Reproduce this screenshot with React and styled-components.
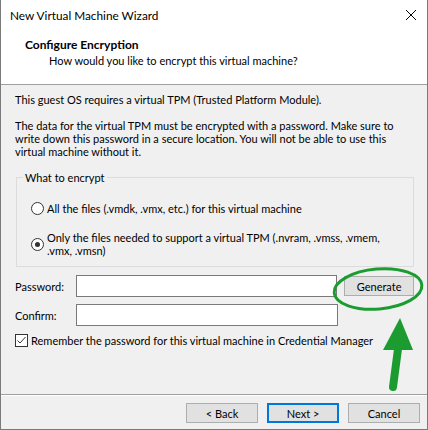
import React from "react"
import styled, { createGlobalStyle } from "styled-components"

const GlobalStyle = createGlobalStyle`
	html, body {
		margin: 0;
		padding: 0;
		background: #ffffff;
	}
	* {
		box-sizing: border-box;
	}
`

const Window = styled.div`
	position: relative;
	width: 428px;
	height: 430px;
	display: flex;
	flex-direction: column;
	background: #f0f0f0;
	border: 1px solid #7a7a7a;
	border-top: none;
	font-family: Lato, "Noto Sans", sans-serif;
	font-size: 11px;
	color: #000000;
	overflow: hidden;
`

const TitleBar = styled.div`
	height: 30px;
	display: flex;
	align-items: center;
	justify-content: space-between;
	padding: 0 9px 0 9px;
	background: #ffffff;
	font-size: 11.8px;
`

const CloseButton = styled.div`
	width: 12px;
	height: 12px;
	display: flex;
	margin-right: 1px;
`

const Header = styled.div`
	height: 55px;
	padding: 6px 0 0 24px;
	background: #ffffff;
	border-bottom: 1px solid #a0a0a0;
`

const HeaderTitle = styled.div`
	font-weight: 700;
	font-size: 12px;
	line-height: 17px;
`

const HeaderSubtitle = styled.div`
	line-height: 16px;
	padding-left: 24px;
`

const Body = styled.div`
	flex: 1;
	display: flex;
	flex-direction: column;
	padding: 8px 13px 0 14px;
`

const Paragraph = styled.p`
	margin: 0 0 13px 0;
	line-height: 13px;
	white-space: nowrap;
`

const GroupBox = styled.fieldset`
	margin: 0 0 0 1px;
	border: 1px solid #dcdcdc;
	display: flex;
	flex-direction: column;
	gap: 16px;
	padding: 18px 10px 9px 14px;
`

const GroupLabel = styled.legend`
	padding: 0 2px;
	margin-left: -8px;
	line-height: 13px;
`

const OptionRow = styled.label`
	display: flex;
	align-items: center;
	gap: 3px;
	line-height: 13px;
	white-space: nowrap;
`

const Radio = styled.span`
	flex: none;
	width: 13px;
	height: 13px;
	border-radius: 50%;
	border: 1px solid #333333;
	background: #ffffff;
	display: flex;
	align-items: center;
	justify-content: center;

	&::after {
		content: "";
		width: 5px;
		height: 5px;
		border-radius: 50%;
		background: ${(p) => (p.checked ? "#333333" : "transparent")};
	}
`

const FieldRow = styled.div`
	display: flex;
	align-items: center;
	margin-top: ${(p) => p.top}px;
`

const FieldLabel = styled.span`
	width: 61px;
	flex: none;
	line-height: 13px;
`

const TextBox = styled.div`
	width: 262px;
	height: 22px;
	background: #ffffff;
	border: 1px solid #7a7a7a;
`

const Button = styled.div`
	width: ${(p) => p.width || 72}px;
	height: 20px;
	display: flex;
	align-items: center;
	justify-content: center;
	background: #e1e1e1;
	border: ${(p) => (p.focused ? "2px solid #0078d7" : "1px solid #adadad")};
	margin-left: ${(p) => p.gap || 0}px;
	line-height: 13px;
`

const CheckRow = styled.div`
	display: flex;
	align-items: center;
	gap: 3px;
	margin-top: 8px;
	line-height: 13px;
	white-space: nowrap;
`

const CheckBox = styled.span`
	flex: none;
	width: 13px;
	height: 13px;
	border: 1px solid #333333;
	background: #ffffff;
	display: flex;
`

const Footer = styled.div`
	height: 35px;
	display: flex;
	justify-content: flex-end;
	align-items: flex-start;
	padding: 8px 7px 0 0;
	border-top: 1px solid #a0a0a0;
	box-shadow: inset 0 1px 0 #ffffff;
`

const Annotation = styled.svg`
	position: absolute;
	left: 0;
	top: 0;
	pointer-events: none;
`

const App = () => {
	return (
		<>
			<GlobalStyle />
			<Window>
				<TitleBar>
					<span>New Virtual Machine Wizard</span>
					<CloseButton>
						<svg width='12' height='12' viewBox='0 0 12 12'>
							<path d='M1 1 L11 11 M11 1 L1 11' stroke='#000' strokeWidth='1' />
						</svg>
					</CloseButton>
				</TitleBar>
				<Header>
					<HeaderTitle>Configure Encryption</HeaderTitle>
					<HeaderSubtitle>How would you like to encrypt this virtual machine?</HeaderSubtitle>
				</Header>
				<Body>
					<Paragraph>This guest OS requires a virtual TPM (Trusted Platform Module).</Paragraph>
					<Paragraph>
						The data for the virtual TPM must be encrypted with a password. Make sure to
						<br />
						write down this password in a secure location. You will not be able to use this
						<br />
						virtual machine without it.
					</Paragraph>
					<GroupBox>
						<GroupLabel>What to encrypt</GroupLabel>
						<OptionRow>
							<Radio />
							<span>All the files (.vmdk, .vmx, etc.) for this virtual machine</span>
						</OptionRow>
						<OptionRow>
							<Radio checked />
							<span>
								Only the files needed to support a virtual TPM (.nvram, .vmss, .vmem,
								<br />
								.vmx, .vmsn)
							</span>
						</OptionRow>
					</GroupBox>
					<FieldRow top={8}>
						<FieldLabel>Password:</FieldLabel>
						<TextBox />
						<Button width={70} gap={7}>
							Generate
						</Button>
					</FieldRow>
					<FieldRow top={7}>
						<FieldLabel>Confirm:</FieldLabel>
						<TextBox />
					</FieldRow>
					<CheckRow>
						<CheckBox>
							<svg width='11' height='11' viewBox='0 0 11 11'>
								<path d='M1.5 5.5 L4 8 L9.5 2' fill='none' stroke='#333' strokeWidth='1' />
							</svg>
						</CheckBox>
						<span>Remember the password for this virtual machine in Credential Manager</span>
					</CheckRow>
				</Body>
				<Footer>
					<Button>&lt; Back</Button>
					<Button focused gap={9}>
						Next &gt;
					</Button>
					<Button gap={9}>Cancel</Button>
				</Footer>
				<Annotation width='428' height='430' viewBox='0 0 428 430'>
					<ellipse
						cx='377'
						cy='289'
						rx='44'
						ry='20'
						transform='rotate(-5 377 289)'
						fill='none'
						stroke='#1c9c30'
						strokeWidth='3'
					/>
					<path d='M397 349 L392 387' stroke='#1c9c30' strokeWidth='8' strokeLinecap='round' />
					<polygon points='399,318 382,350 412,350' fill='#1c9c30' />
				</Annotation>
			</Window>
		</>
	)
}

export default App
